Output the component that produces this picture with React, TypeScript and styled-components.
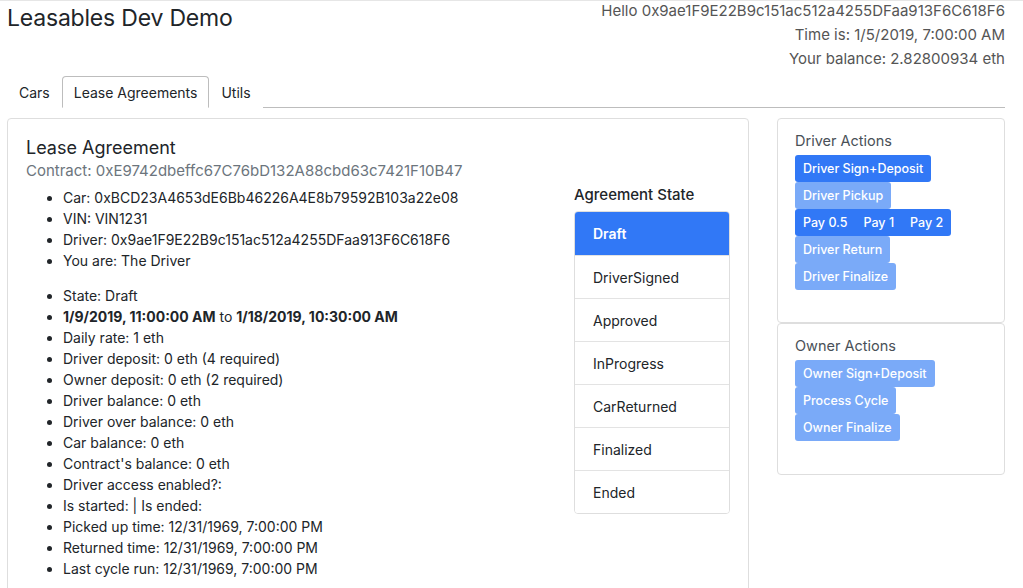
import React from "react";
import styled, { createGlobalStyle } from "styled-components";

const GlobalStyle = createGlobalStyle`
  body {
    margin: 0;
    font-family: Inter, "Liberation Sans", sans-serif;
    font-size: 14px;
    color: #212529;
    background: #fff;
  }
`;

const Page = styled.div`
  border-top: 1px solid #e6e6e6;
  padding: 0 18px 0 7px;
  height: 587px;
  overflow: hidden;
`;

const Header = styled.div`
  display: flex;
  justify-content: space-between;
  align-items: flex-start;
`;

const Title = styled.h1`
  margin: 3px 0 0;
  font-size: 23px;
  font-weight: 400;
  letter-spacing: -0.2px;
`;

const Greeting = styled.div`
  text-align: right;
  color: #555;
  line-height: 24px;
  font-size: 15px;
  margin-top: -2px;
`;

const TabBar = styled.div`
  display: flex;
  margin-top: 5px;
  border-bottom: 1px solid #bdbdbd;
`;

const Tab = styled.div<{ $active?: boolean }>`
  padding: 7px 11px 5px;
  margin-bottom: -1px;
  line-height: 18px;
  color: #212529;
  border: 1px solid ${(p) => (p.$active ? "#bdbdbd" : "transparent")};
  border-bottom-color: ${(p) => (p.$active ? "#fff" : "transparent")};
  border-radius: 4px 4px 0 0;
  background: #fff;
`;

const Content = styled.div`
  display: flex;
  gap: 28px;
  margin-top: 10px;
  align-items: flex-start;
`;

const Card = styled.div`
  border: 1px solid #dedede;
  border-radius: 4px;
  background: #fff;
`;

const MainCard = styled(Card)`
  width: 742px;
  box-sizing: border-box;
  padding: 16px 18px 0;
  height: 480px;
`;

const CardTitle = styled.h2`
  margin: 0;
  font-size: 18px;
  font-weight: 400;
  line-height: 26px;
`;

const Subtitle = styled.div`
  color: #6c757d;
  line-height: 20px;
  font-size: 15px;
`;

const Body = styled.div`
  display: flex;
  justify-content: space-between;
`;

const Details = styled.div`
  flex: 1;
`;

const List = styled.ul<{ $gap?: number }>`
  margin: ${(p) => p.$gap ?? 6}px 0 0;
  padding-left: 37px;
  line-height: 21px;
`;

const StateColumn = styled.div`
  width: 156px;
  margin-top: 4px;
`;

const StateHeading = styled.div`
  font-size: 15px;
  line-height: 20px;
  margin-bottom: 6px;
  font-weight: 500;
`;

const StateList = styled.div`
  border: 1px solid #dedede;
  border-radius: 4px;
  overflow: hidden;
`;

const StateItem = styled.div<{ $active?: boolean }>`
  height: 43px;
  display: flex;
  align-items: center;
  padding-left: 18px;
  box-sizing: border-box;
  border-top: 1px solid ${(p) => (p.$active ? "#3178f6" : "#e3e3e3")};
  background: ${(p) => (p.$active ? "#3178f6" : "#fff")};
  color: ${(p) => (p.$active ? "#fff" : "#212529")};
  font-weight: ${(p) => (p.$active ? 600 : 400)};
  &:first-child {
    border-top: none;
  }
`;

const SideColumn = styled.div`
  width: 228px;
  display: flex;
  flex-direction: column;
`;

const ActionCard = styled(Card)<{ $height: number }>`
  height: ${(p) => p.$height}px;
  box-sizing: border-box;
  padding: 12px 17px 0;
`;

const ActionTitle = styled.div`
  color: #495057;
  font-size: 14.5px;
  line-height: 20px;
  margin-bottom: 4px;
`;

const ButtonStack = styled.div`
  display: flex;
  flex-direction: column;
  align-items: flex-start;
`;

const Button = styled.button<{ $enabled?: boolean }>`
  font-family: inherit;
  font-size: 12.5px;
  font-weight: 500;
  height: 27px;
  padding: 0 8px;
  border: none;
  border-radius: 3px;
  color: #fff;
  background: ${(p) => (p.$enabled ? "#3178f6" : "#7aaaf8")};
  cursor: pointer;
`;

const ButtonGroup = styled.div`
  display: flex;
  background: #3178f6;
  border-radius: 3px;
  ${Button} {
    border-radius: 0;
    background: transparent;
  }
`;

const details = [
  "Car: 0xBCD23A4653dE6Bb46226A4E8b79592B103a22e08",
  "VIN: VIN1231",
  "Driver: 0x9ae1F9E22B9c151ac512a4255DFaa913F6C618F6",
  "You are: The Driver",
];

const balances = [
  "Daily rate: 1 eth",
  "Driver deposit: 0 eth (4 required)",
  "Owner deposit: 0 eth (2 required)",
  "Driver balance: 0 eth",
  "Driver over balance: 0 eth",
  "Car balance: 0 eth",
  "Contract's balance: 0 eth",
  "Driver access enabled?:",
  "Is started: | Is ended:",
  "Picked up time: 12/31/1969, 7:00:00 PM",
  "Returned time: 12/31/1969, 7:00:00 PM",
  "Last cycle run: 12/31/1969, 7:00:00 PM",
];

const states = [
  "Draft",
  "DriverSigned",
  "Approved",
  "InProgress",
  "CarReturned",
  "Finalized",
  "Ended",
];

export default function App() {
  const currentState = "Draft";

  return (
    <>
      <GlobalStyle />
      <Page>
        <Header>
          <Title>Leasables Dev Demo</Title>
          <Greeting>
            <div>Hello 0x9ae1F9E22B9c151ac512a4255DFaa913F6C618F6</div>
            <div>Time is: 1/5/2019, 7:00:00 AM</div>
            <div>Your balance: 2.82800934 eth</div>
          </Greeting>
        </Header>

        <TabBar>
          <Tab>Cars</Tab>
          <Tab $active>Lease Agreements</Tab>
          <Tab>Utils</Tab>
        </TabBar>

        <Content>
          <MainCard>
            <CardTitle>Lease Agreement</CardTitle>
            <Subtitle>
              Contract: 0xE9742dbeffc67C76bD132A88cbd63c7421F10B47
            </Subtitle>
            <Body>
              <Details>
                <List $gap={6}>
                  {details.map((d) => (
                    <li key={d}>{d}</li>
                  ))}
                </List>
                <List $gap={14}>
                  <li>State: {currentState}</li>
                  <li>
                    <b>1/9/2019, 11:00:00 AM</b> to{" "}
                    <b>1/18/2019, 10:30:00 AM</b>
                  </li>
                  {balances.map((b) => (
                    <li key={b}>{b}</li>
                  ))}
                </List>
              </Details>
              <StateColumn>
                <StateHeading>Agreement State</StateHeading>
                <StateList>
                  {states.map((s) => (
                    <StateItem key={s} $active={s === currentState}>
                      {s}
                    </StateItem>
                  ))}
                </StateList>
              </StateColumn>
            </Body>
          </MainCard>

          <SideColumn>
            <ActionCard $height={205}>
              <ActionTitle>Driver Actions</ActionTitle>
              <ButtonStack>
                <Button $enabled>Driver Sign+Deposit</Button>
                <Button>Driver Pickup</Button>
                <ButtonGroup>
                  <Button $enabled>Pay 0.5</Button>
                  <Button $enabled>Pay 1</Button>
                  <Button $enabled>Pay 2</Button>
                </ButtonGroup>
                <Button>Driver Return</Button>
                <Button>Driver Finalize</Button>
              </ButtonStack>
            </ActionCard>
            <ActionCard $height={152}>
              <ActionTitle>Owner Actions</ActionTitle>
              <ButtonStack>
                <Button>Owner Sign+Deposit</Button>
                <Button>Process Cycle</Button>
                <Button>Owner Finalize</Button>
              </ButtonStack>
            </ActionCard>
          </SideColumn>
        </Content>
      </Page>
    </>
  );
}
